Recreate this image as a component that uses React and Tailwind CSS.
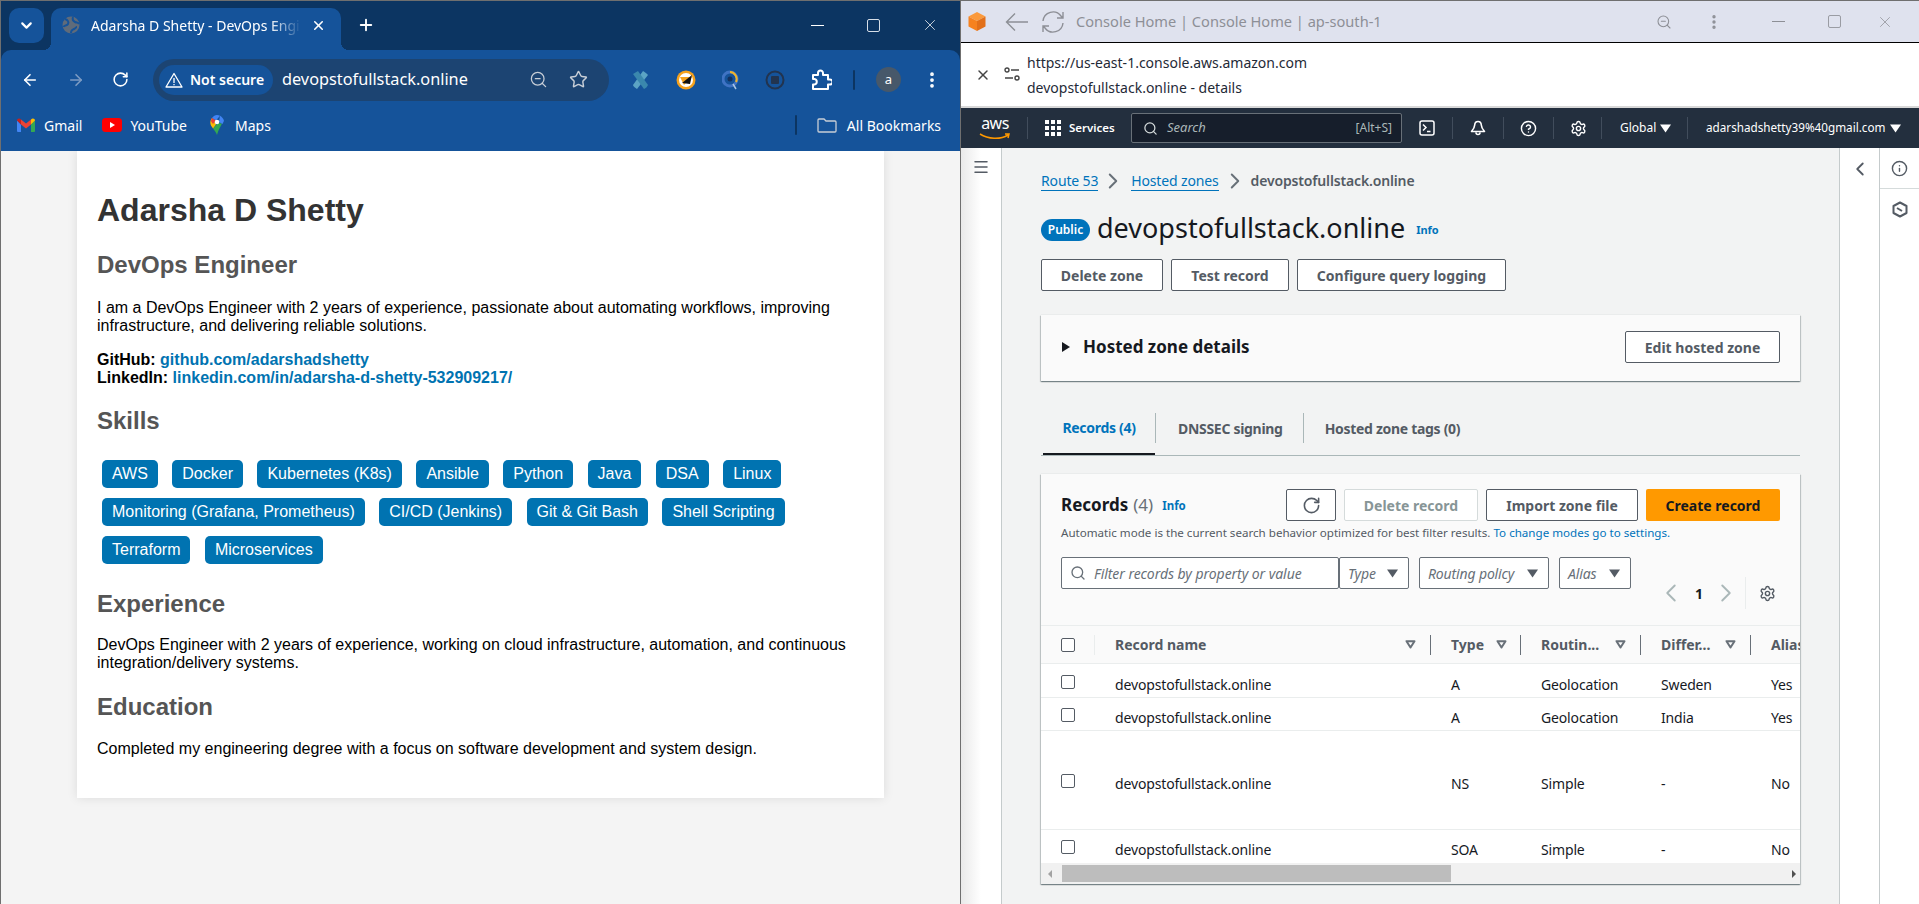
import React from 'react';
import {
  ArrowLeft, ArrowRight, RotateCw, X, Plus, ZoomOut, Star, EllipsisVertical, ChevronDown,
  ChevronLeft, ChevronRight, Search, Settings, CircleHelp, Info, Menu
} from 'lucide-react';

const skills = [
  'AWS', 'Docker', 'Kubernetes (K8s)', 'Ansible', 'Python', 'Java', 'DSA', 'Linux',
  'Monitoring (Grafana, Prometheus)', 'CI/CD (Jenkins)', 'Git & Git Bash', 'Shell Scripting',
  'Terraform', 'Microservices'
];

const records = [
  { type: 'A', policy: 'Geolocation', diff: 'Sweden', alias: 'Yes', row: 'h-[34px] pt-[11px] border-b' },
  { type: 'A', policy: 'Geolocation', diff: 'India', alias: 'Yes', row: 'h-[33px] pt-[10px] border-b' },
  { type: 'NS', policy: 'Simple', diff: '-', alias: 'No', row: 'h-[99px] pt-[43px] border-b' },
  { type: 'SOA', policy: 'Simple', diff: '-', alias: 'No', row: 'h-[33px] pt-[10px]' }
];

const Gmail = () => (
  <svg width="18" height="14" viewBox="0 0 18 14">
    <path d="M0 2.5V13a1 1 0 0 0 1 1h3V6.5z" fill="#4285f4" />
    <path d="M18 2.5V13a1 1 0 0 1-1 1h-3V6.5z" fill="#34a853" />
    <path d="M14 1.5 9 5.5 4 1.5v5l5 4 5-4z" fill="#ea4335" />
    <path d="M0 2.5C0 .6 2.4-.5 4 1.5v5z" fill="#c5221f" />
    <path d="M18 2.5c0-1.9-2.4-3-4-1v5z" fill="#fbbc04" />
  </svg>
);

const YouTube = () => (
  <svg width="20" height="14" viewBox="0 0 20 14">
    <rect width="20" height="14" rx="3.5" fill="#f00" />
    <path d="M8 4v6l5-3z" fill="#fff" />
  </svg>
);

const MapsPin = () => (
  <svg width="14" height="20" viewBox="0 0 14 20">
    <path d="M7 20c-1-3-2.500-4.500-4-6.500L8 8l4 .5C11 11 8 15 7 20z" fill="#34a853" />
    <path d="M2 3 .8 5C0 7 .2 9 1 10.500L3 13.500l3-4z" fill="#fbbc04" />
    <path d="M2 3C3.500 1 5 0 7 0c1 0 2 .2 3 .8L6 5.500z" fill="#4285f4" />
    <path d="M10 .8c2 1 3.500 3 4 5L12.500 9 9 7z" fill="#4285f4" />
    <path d="M2 3 6 5.500 3 9 .8 6z" fill="#ea4335" />
    <circle cx="7" cy="7" r="2.300" fill="#fff" />
  </svg>
);

const SortIcon = () => (
  <svg width="11" height="9" viewBox="0 0 11 9">
    <path d="M1.500 1.200h8L5.500 7.500z" fill="none" stroke="#687078" strokeWidth="2" strokeLinejoin="round" />
  </svg>
);

const Caret = ({ className = 'fill-[#545b64]' }) => (
  <svg width="11" height="9" viewBox="0 0 11 9" className={className}>
    <path d="M0 .5h11L5.500 8.500z" />
  </svg>
);

const ChromeBar = () => (
  <div className="bg-[#0c3562] text-white font-['Noto_Sans',sans-serif]">
    <div className="h-[49px] flex items-start pt-[7px] pl-[8px]">
      <div className="w-[35px] h-[35px] rounded-[10px] bg-[#15539a] flex items-center justify-center">
        <ChevronDown size={17} strokeWidth={3} />
      </div>
      <div className="relative ml-[7px] w-[290px] h-[42px] bg-[#15539a] rounded-t-[10px] flex items-center pl-[11px] pb-[8px]">
        <span className="absolute -left-[8px] bottom-0 w-[8px] h-[8px] bg-[radial-gradient(circle_at_0_0,transparent_8px,#15539a_8px)]" />
        <span className="absolute -right-[8px] bottom-0 w-[8px] h-[8px] bg-[radial-gradient(circle_at_100%_0,transparent_8px,#15539a_8px)]" />
        <svg width="18" height="18" viewBox="0 0 18 18">
          <circle cx="9" cy="9" r="8.500" fill="#5f6b7a" />
          <path d="M3 3c3 1 4 3 3 5S2 9 1.500 11M11 1c-1 3 0 4 2 5s3 0 4 2M9 17c0-3 1-3 3-4s2-2 3-2" fill="none" stroke="#15539a" strokeWidth="2" />
        </svg>
        <span className="ml-[11px] w-[210px] overflow-hidden whitespace-nowrap text-[14px] [mask-image:linear-gradient(to_right,black_85%,transparent)]">
          Adarsha D Shetty - DevOps Engineer
        </span>
        <X size={15} strokeWidth={2.500} className="ml-[10px]" />
      </div>
      <Plus size={18} strokeWidth={2.500} className="ml-[16px] mt-[8px]" />
      <div className="ml-auto flex items-center pt-[8px] pr-[21px] text-white">
        <div className="w-[13px] h-[1px] bg-white" />
        <div className="ml-[43px] w-[13px] h-[13px] border border-[#d7dfe8] rounded-[2px]" />
        <X size={18} strokeWidth={1} className="ml-[41px]" />
      </div>
    </div>
    <div className="h-[51px] bg-[#15539a] rounded-t-[10px] flex items-center pl-[20px] pt-[8px]">
      <ArrowLeft size={18} strokeWidth={2.200} />
      <ArrowRight size={18} strokeWidth={2.200} className="ml-[28px] text-[#7c9bc3]" />
      <RotateCw size={17} strokeWidth={2.200} className="ml-[27px]" />
      <div className="ml-[24px] w-[456px] h-[42px] rounded-full bg-[#1c4472] flex items-center pl-[6px] pr-[21px]">
        <div className="w-[114px] h-[30px] rounded-full bg-[#15539a] flex items-center pl-[6px]">
          <svg width="18" height="16" viewBox="0 0 18 16" fill="none" stroke="#fff" strokeWidth="1.300">
            <path d="M9 1.500 1 15h16z" strokeLinejoin="round" />
            <path d="M9 6v5M9 12v1.300" />
          </svg>
          <span className="ml-[7px] text-[14px] font-semibold">Not secure</span>
        </div>
        <span className="ml-[9px] text-[16.3px]">devopstofullstack.online</span>
        <ZoomOut size={19} strokeWidth={1.600} className="ml-auto text-[#c7ced7]" />
        <Star size={19} strokeWidth={1.800} className="ml-[21px] text-[#c7ced7]" />
      </div>
      <svg width="18" height="20" viewBox="0 0 18 20" className="ml-[22px]">
        <path d="M12 1c2 1 4 3 5 4L6 19c-2-1-4-3-4-4z" fill="#5ba3c4" />
        <path d="M2 4 7 1 17 15c-1 2-2 3-4 4z" fill="#3a87ad" />
      </svg>
      <svg width="20" height="20" viewBox="0 0 20 20" className="ml-[27px]">
        <circle cx="10" cy="10" r="9.500" fill="#f5a11c" />
        <circle cx="10" cy="10" r="7" fill="#fff" />
        <path d="M4 7 16 7 8 15z" fill="#f5a11c" />
        <path d="M16 5 6 13l8 1z" fill="#111" />
      </svg>
      <svg width="18" height="20" viewBox="0 0 18 20" className="ml-[26px]" fill="none">
        <circle cx="8" cy="9" r="7" stroke="#3f73c4" strokeWidth="3" />
        <path d="M8 2a7 7 0 0 1 6 10" stroke="#f0b429" strokeWidth="2" />
        <path d="M11 14l3 5" stroke="#a9c4e4" strokeWidth="1.500" />
        <circle cx="8" cy="9" r="2.500" fill="#13315f" />
      </svg>
      <svg width="20" height="20" viewBox="0 0 20 20" className="ml-[25px]">
        <circle cx="10" cy="10" r="8.500" fill="none" stroke="#22344f" strokeWidth="2" />
        <rect x="6" y="6" width="8" height="8" rx="1" fill="#22344f" />
      </svg>
      <svg width="22" height="22" viewBox="0 0 22 22" className="ml-[25px]" fill="none" stroke="#fff" strokeWidth="2" strokeLinejoin="round">
        <path d="M3 6h5V4a2.500 2.500 0 0 1 5 0v2h5v4.500h2a2.500 2.500 0 0 1 0 5h-2V20H3v-4.500h1.500a2.800 2.800 0 0 0 0-5.500H3z" />
      </svg>
      <div className="ml-[21px] w-[2px] h-[20px] rounded-full bg-[#0c3562]" />
      <div className="ml-[21px] w-[25px] h-[25px] rounded-full bg-[#47586a] flex items-center justify-center text-[13px]">a</div>
      <EllipsisVertical size={20} strokeWidth={2.500} className="ml-[21px]" />
    </div>
    <div className="h-[50px] bg-[#15539a] flex items-center pl-[16px] pb-[2px] text-[14px]">
      <Gmail />
      <span className="ml-[9px]">Gmail</span>
      <div className="ml-[20px]"><YouTube /></div>
      <span className="ml-[8px]">YouTube</span>
      <div className="ml-[23px]"><MapsPin /></div>
      <span className="ml-[11px]">Maps</span>
      <div className="ml-[524px] w-[2px] h-[20px] rounded-full bg-[#0c3562]" />
      <svg width="20" height="15" viewBox="0 0 20 15" fill="none" stroke="#c8ced6" strokeWidth="1.300" className="ml-[20px]">
        <path d="M1 2a1 1 0 0 1 1-1h5l2 2h9a1 1 0 0 1 1 1v9a1 1 0 0 1-1 1H2a1 1 0 0 1-1-1z" />
      </svg>
      <span className="ml-[10px]">All Bookmarks</span>
    </div>
  </div>
);

const Profile = () => (
  <div className="flex-1 bg-[#f4f4f4] overflow-hidden pl-[76px] pr-[76px] font-['Liberation_Sans',Arial,sans-serif] text-[16px] leading-[18px] text-black">
    <div className="bg-white h-[647px] px-[20px] pt-[41px] shadow-[0_0_10px_rgba(0,0,0,0.1)]">
      <h1 className="text-[32px] leading-[37px] font-bold text-[#333333]">Adarsha D Shetty</h1>
      <h2 className="mt-[22px] text-[24px] leading-[28px] font-bold text-[#555555]">DevOps Engineer</h2>
      <p className="mt-[20px]">
        I am a DevOps Engineer with 2 years of experience, passionate about automating workflows, improving infrastructure, and delivering reliable solutions.
      </p>
      <p className="mt-[16px] font-bold">
        GitHub: <span className="text-[#0073b1]">github.com/adarshadshetty</span>
        <br />
        LinkedIn: <span className="text-[#0073b1]">linkedin.com/in/adarsha-d-shetty-532909217/</span>
      </p>
      <h2 className="mt-[20px] text-[24px] leading-[28px] font-bold text-[#555555]">Skills</h2>
      <div className="mt-[25px] ml-[5px] flex flex-wrap gap-x-[14.45px] gap-y-[10px]">
        {skills.map((skill) => (
          <span key={skill} className="h-[28px] px-[10px] py-[5px] rounded-[5px] bg-[#0073b1] text-white">{skill}</span>
        ))}
      </div>
      <h2 className="mt-[26px] text-[24px] leading-[28px] font-bold text-[#555555]">Experience</h2>
      <p className="mt-[18px]">
        DevOps Engineer with 2 years of experience, working on cloud infrastructure, automation, and continuous integration/delivery systems.
      </p>
      <h2 className="mt-[21px] text-[24px] leading-[28px] font-bold text-[#555555]">Education</h2>
      <p className="mt-[19px]">Completed my engineering degree with a focus on software development and system design.</p>
    </div>
  </div>
);

const PopupBar = () => (
  <div className="font-['Noto_Sans',sans-serif]">
    <div className="h-[42px] bg-[#dfe2ee] border-b border-black flex items-center pl-[6px] pr-[25px] text-[#8d8f96]">
      <svg width="20" height="21" viewBox="0 0 20 21">
        <path d="M10 1 18.500 5.500 10 10 1.500 5.500z" fill="#fb9a3c" />
        <path d="M1.500 5.500 10 10v10L1.500 15.500z" fill="#f6821f" />
        <path d="M18.500 5.500 10 10v10l8.500-4.500z" fill="#e2701a" />
      </svg>
      <svg width="23" height="20" viewBox="0 0 23 20" fill="none" stroke="currentColor" strokeWidth="1.400" className="ml-[18px]">
        <path d="M23 10H1.500M10 1.500 1.500 10l8.500 8.500" />
      </svg>
      <svg width="24" height="24" viewBox="0 0 24 24" fill="none" stroke="currentColor" strokeWidth="1.400" className="ml-[13px]">
        <path d="M2 11a10 10 0 0 1 18-5l2 2M22 2v6h-6M22 13a10 10 0 0 1-18 5l-2-2M2 22v-6h6" />
      </svg>
      <span className="ml-[11px] text-[14.6px] whitespace-nowrap">Console Home | Console Home | ap-south-1</span>
      <ZoomOut size={16} strokeWidth={1.600} className="ml-auto" />
      <EllipsisVertical size={18} strokeWidth={2.500} className="ml-[33px]" />
      <div className="ml-[49px] w-[13px] h-[1px] bg-[#8d8f96]" />
      <div className="ml-[43px] w-[13px] h-[13px] border border-[#9a9ca3] rounded-[2px]" />
      <X size={18} strokeWidth={1} className="ml-[35px]" />
    </div>
    <div className="h-[65px] bg-white border-b-2 border-[#d8d8d8] flex items-center pl-[14px]">
      <X size={16} strokeWidth={2.200} className="text-[#444]" />
      <svg width="16" height="15" viewBox="0 0 16 15" fill="none" stroke="#444" strokeWidth="1.400" className="ml-[13px]">
        <circle cx="3" cy="3" r="2" />
        <path d="M7 3h8M1 11h8" />
        <circle cx="13" cy="11" r="2" />
      </svg>
      <div className="ml-[7px] text-[14px] leading-[25px] text-[#1f2a37]">
        <div>https://us-east-1.console.aws.amazon.com</div>
        <div>devopstofullstack.online - details</div>
      </div>
    </div>
  </div>
);

const AwsNav = () => (
  <div className="h-[40px] bg-[#232f3e] text-white flex items-center font-['Noto_Sans',sans-serif] text-[12px]">
    <div className="ml-[18px] w-[32px] h-[30px] relative flex justify-center">
      <span className="text-[16px] leading-[20px] tracking-[-0.5px]">aws</span>
      <svg width="32" height="8" viewBox="0 0 32 8" className="absolute left-0 bottom-[2px]">
        <path d="M1 1c8 5 20 6 28 1M26 1l4 0-1 4" fill="none" stroke="#ff9900" strokeWidth="1.500" />
      </svg>
    </div>
    <div className="ml-[16px] w-px h-[22px] bg-[#414d5c]" />
    <div className="ml-[17px] grid grid-cols-3 gap-[2px]">
      {[0, 1, 2, 3, 4, 5, 6, 7, 8].map((n) => <span key={n} className="w-[4px] h-[4px] bg-white" />)}
    </div>
    <span className="ml-[8px] w-[45px] text-[11.5px] font-semibold whitespace-nowrap">Services</span>
    <div className="ml-[17px] w-[271px] h-[30px] bg-[#161e2b] border border-[#687078] rounded-[2px] flex items-center pl-[11px] pr-[9px] text-[#aab7b8]">
      <Search size={15} strokeWidth={2} className="text-[#d5dbdb]" />
      <span className="ml-[9px] italic text-[13px]">Search</span>
      <span className="ml-auto text-[12px]">[Alt+S]</span>
    </div>
    <svg width="16" height="16" viewBox="0 0 16 16" fill="none" stroke="#fff" strokeWidth="1.500" className="ml-[17px]">
      <rect x="1" y="1" width="14" height="14" rx="2" />
      <path d="M4 4.500 7 7.500 4 10.500M8 11.500h3.500" />
    </svg>
    <div className="ml-[17px] w-px h-[22px] bg-[#414d5c]" />
    <svg width="16" height="16" viewBox="0 0 16 16" fill="none" stroke="#fff" strokeWidth="1.600" className="ml-[17px]">
      <path d="M8 1.500c-2 0-3.200 1.500-3.300 3.500-.1 2.500-1 4-3.200 6.500h13c-2.200-2.500-3.100-4-3.200-6.500C11.200 3 10 1.500 8 1.500zM6 12.500a2 2 0 0 0 4 0" strokeLinejoin="round" />
    </svg>
    <div className="ml-[17px] w-px h-[22px] bg-[#414d5c]" />
    <CircleHelp size={17} strokeWidth={2} className="ml-[16px]" />
    <div className="ml-[16px] w-px h-[22px] bg-[#414d5c]" />
    <Settings size={17} strokeWidth={2} className="ml-[16px]" />
    <div className="ml-[14px] w-px h-[22px] bg-[#414d5c]" />
    <span className="ml-[18px] w-[35px]">Global</span>
    <Caret className="ml-[5px] fill-white" />
    <div className="ml-[16px] w-px h-[22px] bg-[#414d5c]" />
    <span className="ml-[18px] text-[11.7px] whitespace-nowrap">adarshadshetty39%40gmail.com</span>
    <Caret className="ml-[5px] fill-white" />
  </div>
);

const OutlineButton = ({ className = '', children }) => (
  <div className={`h-[32px] border border-[#545b64] rounded-[2px] bg-white flex items-center justify-center text-[14px] font-bold text-[#545b64] whitespace-nowrap ${className}`}>
    {children}
  </div>
);

const SelectBox = ({ label, className = '' }) => (
  <div className={`h-[32px] border border-[#687078] rounded-[2px] bg-white flex items-center justify-between pl-[8px] pr-[10px] ${className}`}>
    <span className="italic text-[14px] tracking-[-0.15px] text-[#687078]">{label}</span>
    <Caret />
  </div>
);

const HeaderCell = ({ label, pr = 'pr-[14px]', sort = true }) => (
  <div className="h-[20px] pl-[20px] border-r border-[#687078] flex items-center justify-between overflow-hidden whitespace-nowrap">
    <span>{label}</span>
    {sort && <span className={pr}><SortIcon /></span>}
  </div>
);

const Checkbox = () => <div className="w-[14px] h-[14px] border border-[#545b64] rounded-[2px] bg-white" />;

const RecordsCard = () => (
  <div className="mt-[18px] bg-[#fafafa] shadow-[0_0_1px_0_rgba(0,28,36,0.2),0_1px_1px_0_rgba(0,28,36,0.3),1px_1px_1px_0_rgba(0,28,36,0.15),-1px_1px_1px_0_rgba(0,28,36,0.15)]">
    <div className="h-[151px] px-[20px] pt-[15px]">
      <div className="flex items-center">
        <span className="text-[17px] font-bold text-[#16191f]">Records</span>
        <span className="ml-[5px] text-[17px] text-[#687078]">(4)</span>
        <span className="ml-[9px] mt-[2px] text-[11.5px] font-bold text-[#0073bb]">Info</span>
        <OutlineButton className="ml-auto w-[50px]"><RotateCw size={19} strokeWidth={2} /></OutlineButton>
        <div className="ml-[8px] w-[134px] h-[32px] border border-[#d5dbdb] rounded-[2px] bg-white flex items-center justify-center text-[14px] font-bold text-[#879596]">
          Delete record
        </div>
        <OutlineButton className="ml-[8px] w-[152px]">Import zone file</OutlineButton>
        <div className="ml-[8px] w-[134px] h-[32px] rounded-[2px] bg-[#ff9900] flex items-center justify-center text-[14px] font-bold text-[#16191f]">
          Create record
        </div>
      </div>
      <p className="mt-[3px] text-[11.6px] leading-[18px] text-[#545b64]">
        Automatic mode is the current search behavior optimized for best filter results. <span className="text-[#0073bb]">To change modes go to settings.</span>
      </p>
      <div className="mt-[15px] flex items-start">
        <div className="w-[278px] h-[32px] border border-[#687078] rounded-[2px] bg-white flex items-center pl-[8px]">
          <Search size={16} strokeWidth={2} className="text-[#687078]" />
          <span className="ml-[8px] italic text-[14px] tracking-[-0.05px] text-[#687078]">Filter records by property or value</span>
        </div>
        <SelectBox label="Type" className="w-[70px]" />
        <SelectBox label="Routing policy" className="ml-[10px] w-[130px]" />
        <SelectBox label="Alias" className="ml-[10px] w-[72px]" />
        <div className="ml-[25px] mt-[20px] h-[32px] flex items-center">
          <ChevronLeft size={30} strokeWidth={1.500} className="text-[#aab7b8]" />
          <span className="ml-[9px] w-[8px] text-[14px] font-bold text-[#16191f]">1</span>
          <ChevronRight size={30} strokeWidth={1.500} className="ml-[8px] text-[#aab7b8]" />
          <div className="ml-[4px] w-px h-[32px] bg-[#eaeded]" />
          <Settings size={17} strokeWidth={2} className="ml-[13px] text-[#545b64]" />
        </div>
      </div>
    </div>
    <div className="h-[39px] border-y border-[#eaeded] grid grid-cols-[54px_336px_90px_120px_110px_1fr] items-center text-[14px] font-bold text-[#545b64] overflow-hidden">
      <div className="h-[20px] pl-[20px] border-r border-[#eaeded] flex items-center"><Checkbox /></div>
      <HeaderCell label="Record name" />
      <HeaderCell label="Type" pr="pr-[13px]" />
      <HeaderCell label="Routin..." />
      <HeaderCell label="Differ..." />
      <div className="pl-[20px] whitespace-nowrap">Alias</div>
    </div>
    <div className="bg-white text-[14px] leading-[20px] tracking-[-0.15px] text-[#16191f]">
      {records.map((record, i) => (
        <div key={i} className={`${record.row} border-[#eaeded] grid grid-cols-[54px_336px_90px_120px_110px_1fr] items-start`}>
          <div className="pl-[20px]"><Checkbox /></div>
          <div className="pl-[20px]">devopstofullstack.online</div>
          <div className="pl-[20px]">{record.type}</div>
          <div className="pl-[20px]">{record.policy}</div>
          <div className="pl-[20px]">{record.diff}</div>
          <div className="pl-[20px]">{record.alias}</div>
        </div>
      ))}
    </div>
    <div className="h-[21px] bg-[#f1f1f1] flex items-center pl-[7px] pr-[4px]">
      <span className="w-0 h-0 border-y-[4px] border-y-transparent border-r-[4px] border-r-[#a3a3a3]" />
      <div className="ml-[10px] w-[389px] h-[17px] bg-[#bdbdbd]" />
      <span className="ml-auto w-0 h-0 border-y-[4px] border-y-transparent border-l-[4px] border-l-[#505050]" />
    </div>
  </div>
);

const Console = () => (
  <div className="flex-1 flex overflow-hidden font-['Noto_Sans',sans-serif]">
    <div className="w-[41px] border-r border-[#c5cbcc] bg-gradient-to-r from-[#e9e9e9] via-white to-white flex justify-center pt-[10px]">
      <Menu size={18} strokeWidth={2} className="text-[#545b64]" />
    </div>
    <div className="w-[837px] bg-[#f2f3f3] pl-[39px] pr-[39px] pt-[20px]">
      <div className="flex items-center text-[14px] leading-[20px] tracking-[-0.15px]">
        <span className="text-[#0073bb] border-b border-[#0073bb] leading-[18px]">Route 53</span>
        <ChevronRight size={26} strokeWidth={1.800} className="ml-[2px] mr-[5px] text-[#687078]" />
        <span className="text-[#0073bb] border-b border-[#0073bb] leading-[18px]">Hosted zones</span>
        <ChevronRight size={26} strokeWidth={1.800} className="ml-[3px] mr-[3px] text-[#687078]" />
        <span className="font-semibold text-[#545b64]">devopstofullstack.online</span>
      </div>
      <div className="mt-[13px] flex items-center h-[42px]">
        <span className="w-[49px] h-[22px] rounded-full bg-[#0073bb] text-white text-[12px] font-semibold flex items-center justify-center mt-[3px]">Public</span>
        <span className="ml-[7px] text-[27px] leading-[42px] text-[#16191f]">devopstofullstack.online</span>
        <span className="ml-[11px] mt-[5px] text-[11px] font-bold text-[#0073bb]">Info</span>
      </div>
      <div className="mt-[10px] flex gap-[8px]">
        <OutlineButton className="w-[122px]">Delete zone</OutlineButton>
        <OutlineButton className="w-[118px]">Test record</OutlineButton>
        <OutlineButton className="w-[209px]">Configure query logging</OutlineButton>
      </div>
      <div className="mt-[24px] h-[66px] bg-[#fafafa] flex items-center pl-[21px] pr-[20px] pb-[2px] shadow-[0_0_1px_0_rgba(0,28,36,0.2),0_1px_1px_0_rgba(0,28,36,0.3),1px_1px_1px_0_rgba(0,28,36,0.15),-1px_1px_1px_0_rgba(0,28,36,0.15)]">
        <span className="w-0 h-0 border-y-[5px] border-y-transparent border-l-[8px] border-l-[#16191f]" />
        <span className="ml-[13px] text-[17px] font-bold text-[#16191f]">Hosted zone details</span>
        <OutlineButton className="ml-auto w-[155px]">Edit hosted zone</OutlineButton>
      </div>
      <div className="mt-[32px] h-[43px] border-b border-[#aab7b8] flex items-start text-[14px] font-bold tracking-[-0.3px] text-[#545b64]">
        <div className="ml-[2px] w-[112px] h-[42px] border-b-2 border-[#16191f] text-[#0073bb] text-center pt-[3px]">
          <span className="leading-[24px]">Records (4)</span>
        </div>
        <div className="w-px h-[30px] bg-[#aab7b8]" />
        <span className="ml-[22px] pt-[5px]">DNSSEC signing</span>
        <div className="ml-[20px] w-px h-[30px] bg-[#aab7b8]" />
        <span className="ml-[21px] pt-[5px]">Hosted zone tags (0)</span>
      </div>
      <RecordsCard />
    </div>
    <div className="w-[40px] bg-white border-l border-[#c5cbcc] flex justify-center pt-[10px]">
      <ChevronLeft size={22} strokeWidth={2} className="text-[#545b64]" />
    </div>
    <div className="flex-1 bg-white border-l border-[#c5cbcc] text-[#545b64]">
      <div className="h-[41px] border-b border-[#d5dbdb] flex items-center justify-center">
        <Info size={17} strokeWidth={2} />
      </div>
      <div className="flex justify-center pt-[12px]">
        <svg width="16" height="17" viewBox="0 0 16 17" fill="none" stroke="currentColor" strokeWidth="2">
          <path d="M8 1.500 14.500 5v7L8 15.500 1.500 12V5z" strokeLinejoin="round" />
          <path d="M5 7l5 3" />
        </svg>
      </div>
    </div>
  </div>
);

const App = () => (
  <div className="w-[1919px] h-[904px] overflow-hidden flex border-t border-[#6f6f6f] bg-white">
    <section className="w-[960px] h-full flex flex-col border-l border-[#6f6f6f]">
      <ChromeBar />
      <Profile />
    </section>
    <section className="w-[959px] h-full flex flex-col border-l border-[#6f6f6f]">
      <PopupBar />
      <AwsNav />
      <Console />
    </section>
  </div>
);

export default App;
